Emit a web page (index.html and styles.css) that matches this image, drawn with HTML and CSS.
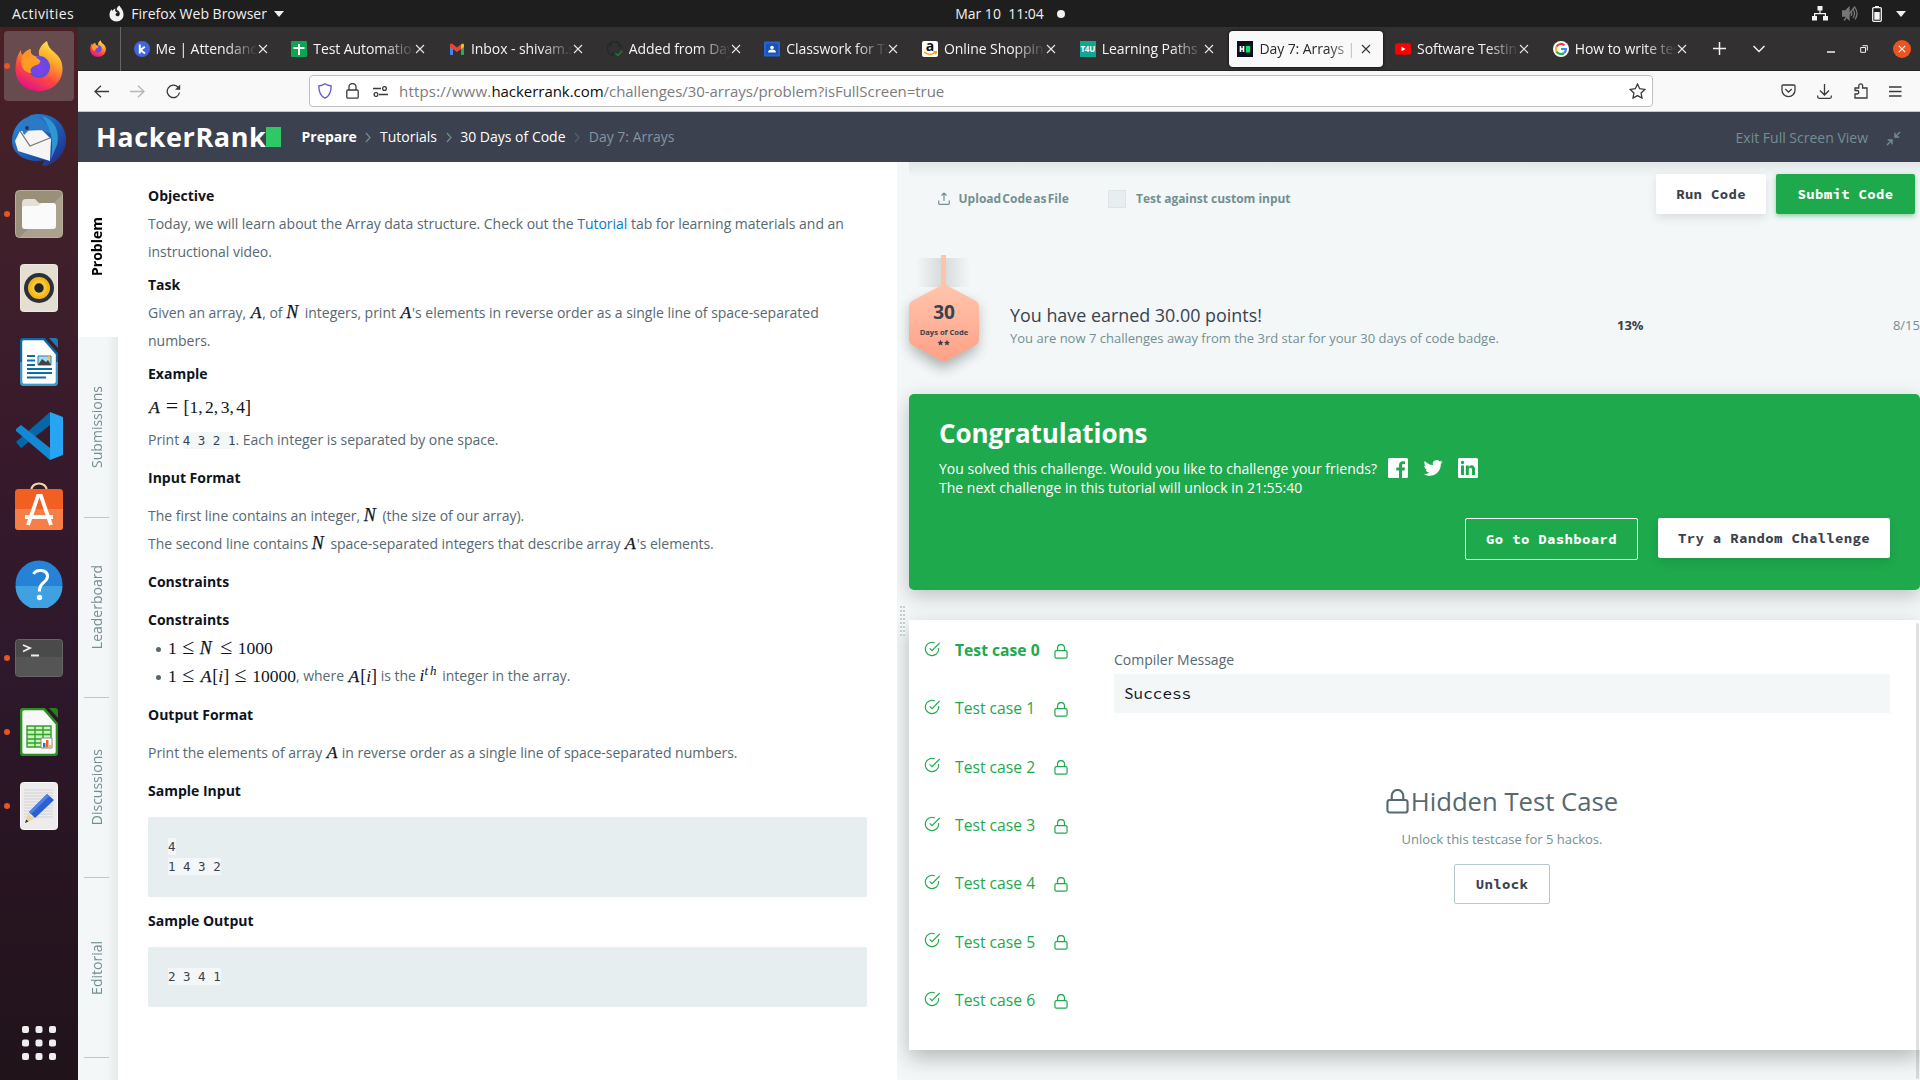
FILE: index.html
```
<!DOCTYPE html>
<html lang="en">
<head>
<meta charset="utf-8">
<title>Day 7: Arrays | HackerRank</title>
<link rel="stylesheet" href="styles.css">
</head>
<body>
<svg class="defs" width="0" height="0" aria-hidden="true">
  <defs>
    <linearGradient id="ffBody" x1=".8" y1="0" x2=".3" y2="1"><stop offset="0" stop-color="#fff04a"/><stop offset=".35" stop-color="#ffa52a"/><stop offset=".65" stop-color="#ff4a41"/><stop offset="1" stop-color="#e01085"/></linearGradient>
    <linearGradient id="ffEar" x1="0" y1="0" x2="1" y2="1"><stop offset="0" stop-color="#ff8a2a"/><stop offset="1" stop-color="#ffb02a"/></linearGradient>
    <radialGradient id="ffGlobe"><stop offset="0" stop-color="#8a3cf5"/><stop offset="1" stop-color="#5a4fd8"/></radialGradient>
    <linearGradient id="tbBody" x1="0" y1="0" x2="1" y2="1"><stop offset="0" stop-color="#2d8fe0"/><stop offset=".6" stop-color="#1e55ad"/><stop offset="1" stop-color="#27217e"/></linearGradient>
    <linearGradient id="badge" x1="0" y1="0" x2="0" y2="1"><stop offset="0" stop-color="#ffc6ae"/><stop offset="1" stop-color="#ffa086"/></linearGradient>
    <linearGradient id="cordShade"><stop offset="0" stop-color="#000" stop-opacity="0"/><stop offset=".5" stop-color="#000" stop-opacity=".12"/><stop offset="1" stop-color="#000" stop-opacity="0"/></linearGradient>
    <filter id="soft" x="-50%" y="-50%" width="200%" height="200%"><feGaussianBlur stdDeviation="7"/></filter>
    <symbol id="firefox" viewBox="0 0 48 50">
      <path d="M24 50C9 50 .5 40 .5 28 .5 19 3 13 6 9c0 3 .5 4 1.500 5 2-3 5-5 8-6 0 4 1 6 4 7l5 0C22 9 27 3 32 0c1 5 3 8 7 11 6 5 8.500 10 8.500 17C47.500 40 38 50 24 50z" fill="url(#ffBody)"/>
      <circle cx="24" cy="26" r="11" fill="url(#ffGlobe)"/>
      <path d="M7.500 14c2-3 5-5 8-6 0 4 1 6 4 7l6 5c-1 3-4 3-7 4-4 2-4 5-2 8-4 0-9-3-10-8-.6-3 0-7 1-10z" fill="url(#ffEar)"/>
      <path d="M6 20c4-2 7-1 10 1 3-1 6-1 9 .5-2 3-5 2.500-7 4-2 1.500-3 3-2.500 5-4-2-8-6-9.500-10.500z" fill="#ff9d1e"/>
    </symbol>
    <symbol id="lock" viewBox="0 0 24 26"><rect x="1.500" y="11.500" width="21" height="13" rx="2.500"/><path d="M6 11.500V7a6 6 0 0 1 12 0v4.500"/></symbol>
    <symbol id="check" viewBox="0 0 24 24"><path d="M22 10.500V12a10 10 0 1 1-6-9.200M23.500 3 12 14.500 8.500 11"/></symbol>
    <symbol id="x" viewBox="0 0 10 10"><path d="M1 1l8 8M9 1L1 9"/></symbol>
  </defs>
</svg>

<header class="topbar">
  <div class="topbar-left">
    <span>Activities</span>
    <span class="app-menu">
      <svg width="15" height="17" viewBox="0 0 15 17"><path d="M7.500 16.500C3.300 16.500.500 13.600.500 9.800.500 7 1.600 5.200 2.600 4.200c.2 1 .5 1.200 1 1.600C4.500 4.500 5.500 3.800 6.500 3.600 5.500 6 6.500 7 8.500 7.500 7 8 6 9 6.800 10.600c1.700 1.600 4.200.3 4-1.900-.1-1.800-1.600-3-3-3.600C7.600 3 8.800 1.400 10.500.500c.4 2 4 3.700 4 9.300 0 3.800-2.800 6.700-7 6.700z" fill="#f2f2f2"/></svg>
      Firefox Web Browser
      <i class="caret"></i>
    </span>
  </div>
  <div class="clock">Mar 10&nbsp; 11:04 <i class="notice"></i></div>
  <div class="topbar-right">
    <svg width="16" height="15" viewBox="0 0 16 15" fill="#f2f2f2"><path d="M5.500 0h5v4.500h-5zM0 10h5v4.500H0zM11 10h5v4.500h-5zM7.400 4h1.200v4H7.400zM2 7h12v3.500h-1.200V8.200H3.200v2.300H2z"/></svg>
    <svg width="16" height="15" viewBox="0 0 16 15" fill="none" stroke="#777" stroke-width="1.300"><path d="M.5 5h3L7 1.500v12L3.500 10h-3z" fill="#777"/><path d="M9 5q1.500 2.500 0 5M11 3q3 4.500 0 9M13 1.500q4 6 0 12M2 14.500 13 .5"/></svg>
    <svg width="10" height="16" viewBox="0 0 10 16"><path d="M3 0h4v2H3z" fill="#f2f2f2"/><rect x=".7" y="1.700" width="8.600" height="13.600" rx="1" fill="none" stroke="#f2f2f2" stroke-width="1.300"/><path d="M2.300 6h5.400v7.700H2.300z" fill="#f2f2f2"/></svg>
    <i class="caret"></i>
  </div>
</header>

<div class="desktop">
  <nav class="dock">
    <div class="dock-item active running"><svg width="48" height="50"><use href="#firefox"/></svg></div>
    <div class="dock-item"><svg width="54" height="54" viewBox="0 0 54 54"><path d="M16 4C22-1 34 1 42 5c8 5 12 13 12 22 0 12-8 22-20 26l-4-1 3-5C20 51 0 44 0 28 0 17 7 7 16 4z" fill="url(#tbBody)"/><path d="M8 18l22-1 9 9-1 22L6 38 3 28z" fill="#f5f5f5"/><path d="M8 18l10 15 20-8" fill="none" stroke="#777" stroke-width="1.300"/><path d="M17 4c10-2 20 5 22 17l-9-4c-5 1-9-3-14 1l-4 4C8 14 10 7 17 4z" fill="#2c79c8"/><path d="M30 3c13 4 18 15 15 29l-6 14c3-18 0-31-9-43z" fill="#2b98d4"/><circle cx="15" cy="15" r="2" fill="#25385a"/></svg></div>
    <div class="dock-item running"><svg width="48" height="48" viewBox="0 0 48 48"><rect x=".5" y=".5" width="47" height="47" rx="4" fill="#999079" stroke="#b8b09d"/><path d="M47 5v38a4 4 0 0 1-4 4H5z" fill="#aaa28e"/><path d="M7 13q0-4 4-4h9l4 4h12v10H7z" fill="#e4e0d8"/><path d="M7 19q0-3 3-3h13l4-3h11q3 0 3 3v20q0 3-3 3H10q-3 0-3-3z" fill="#fafafa"/></svg></div>
    <div class="dock-item"><svg width="38" height="48" viewBox="0 0 38 48"><rect x=".5" y=".5" width="37" height="47" rx="3" fill="#e4dfd2" stroke="#eee9df"/><circle cx="19" cy="24" r="15" fill="#2b303a"/><circle cx="19" cy="24" r="11" fill="#f3b816"/><circle cx="19" cy="24" r="8" fill="#fad45a" opacity=".5"/><circle cx="19" cy="24" r="4.700" fill="#20242b"/></svg></div>
    <div class="dock-item"><svg width="38" height="48" viewBox="0 0 38 48"><path d="M3 1h21l13 15v28q0 3-3 3H4q-3 0-3-3V4q0-3 3-3z" fill="#fff" stroke="#0d67a4" stroke-width="2.400"/><path d="M1 24v20q0 3 3 3h30q3 0 3-3V24" fill="none" stroke="#3a9bc9" stroke-width="2"/><path d="M29 0h6q3 0 3 3v7z" fill="#1c7bb5"/><path d="M7 18h8M7 22.500h8M7 27h8M7 31h25M7 35h25M7 39.500h19" stroke="#0c6ea9" stroke-width="2"/><path d="M18 18h13v9H18z" fill="#a7d8f2" stroke="#2b7bac"/><path d="M18 27l4-6 4 3 2-2 3 5z" fill="#434343"/><circle cx="29" cy="19.500" r="1.500" fill="#f7c42c"/></svg></div>
    <div class="dock-item"><svg width="48" height="48" viewBox="0 0 48 48"><path d="M1 30L35 0v13L6 36z" fill="#0667a8"/><path d="M1 17l5-4 29 23v12L1 19z" fill="#1389d4"/><path d="M35 0l13 5v38l-13 5z" fill="#27a4f2"/></svg></div>
    <div class="dock-item raised"><svg width="48" height="50" viewBox="0 0 48 50"><path d="M16 10C16 0 32 0 32 10" fill="none" stroke="#f3d5a5" stroke-width="2.200"/><rect y="8" width="48" height="41" rx="3.500" fill="#f25f22"/><path d="M0 28h48v17.500q0 3.500-3.500 3.500h-41Q0 49 0 45.500z" fill="#f57f45"/><path d="M13 44l10-29h3l10 29M10 36h28" fill="none" stroke="#fff" stroke-width="3.800"/></svg></div>
    <div class="dock-item"><svg width="48" height="48" viewBox="0 0 48 48"><circle cx="24" cy="24" r="23.500" fill="#2582d6"/><path d="M.5 26h47A23.500 23.500 0 0 1 .5 26z" fill="#3fa0e2"/><path d="M18.500 14c3-5.500 14-4.500 14 2.500 0 6-8 6-8 13v2" fill="none" stroke="#fff" stroke-width="3"/><circle cx="24.500" cy="37.500" r="2.700" fill="#fff"/></svg></div>
    <div class="dock-item running"><svg width="48" height="38" viewBox="0 0 48 38"><rect x=".5" y=".5" width="47" height="37" rx="3" fill="#4a4a4a" stroke="#666"/><path d="M1 18h46v16q0 3-3 3H4q-3 0-3-3z" fill="#555"/><path d="M8 6l7 3-7 3.500M16 16.500h8" fill="none" stroke="#eee" stroke-width="1.800"/></svg></div>
    <div class="dock-item running"><svg width="38" height="48" viewBox="0 0 38 48"><path d="M3 1h21l13 15v28q0 3-3 3H4q-3 0-3-3V4q0-3 3-3z" fill="#f8f8f8" stroke="#27911d" stroke-width="2.600"/><path d="M29 0h6q3 0 3 3v7z" fill="#218317"/><path d="M7 18h24v21H7z" fill="#c9f3bf"/><path d="M7 18h24v21H7zM7 22h24M7 26.500h24M7 31h24M7 35h24M15 18v21M23 18v21" fill="none" stroke="#33a027" stroke-width="1.400"/><path d="M21 30h11v10H21z" fill="#fff" stroke="#888"/><path d="M23 35h2.500v4.500H23z" fill="#1d76c4"/><path d="M26 32h2.500v7.500H26z" fill="#e8622a"/><path d="M29 37h2.500v2.500H29z" fill="#f3bf2b"/></svg></div>
    <div class="dock-item running"><svg width="38" height="48" viewBox="0 0 38 48"><rect x=".5" y=".5" width="37" height="47" rx="3" fill="#ececec" stroke="#fafafa"/><path d="M4 8h29M4 11h29M4 14h29M4 17h29M4 20h29M4 23h29M4 26h29M4 29h29M4 32h29M4 35h29" stroke="#d2d2d2"/><path d="M5 41l3-9 6 5z" fill="#f1cf9f"/><path d="M5 41l1.200-3.500 2.300 2z" fill="#333"/><path d="M27 12l7 6-19 18-6-6z" fill="#2c5fd0"/><path d="M27 12l2.500 2L11 32l-2-2z" fill="#4f82e8"/></svg></div>
    <div class="dock-item apps"><svg width="34" height="34" viewBox="0 0 34 34" fill="#eee"><g id="dots"><rect width="7" height="7" rx="2"/><rect x="13.500" width="7" height="7" rx="2"/><rect x="27" width="7" height="7" rx="2"/></g><use href="#dots" y="13.500"/><use href="#dots" y="27"/></svg></div>
  </nav>

  <div class="window">
    <div class="tabstrip">
      <div class="pinned"><svg width="16" height="17"><use href="#firefox"/></svg></div>
      <div class="tabs">
        <div class="tab"><svg width="16" height="16" viewBox="0 0 16 16"><circle cx="8" cy="8" r="8" fill="#3f64e0"/><path d="M5.800 3.500v9M10.800 5.800 6.500 9l4.500 3.500" fill="none" stroke="#fff" stroke-width="2"/></svg><span>Me | Attendance</span><svg class="close"><use href="#x"/></svg></div>
        <div class="tab"><svg width="16" height="16" viewBox="0 0 16 16"><rect width="16" height="16" rx="1" fill="#0da454"/><path d="M8 3v11M2.500 7h11" stroke="#fff" stroke-width="2"/></svg><span>Test Automation</span><svg class="close"><use href="#x"/></svg></div>
        <div class="tab"><svg width="16" height="16" viewBox="0 0 16 16"><path d="M1 3h3v11H2q-1 0-1-1z" fill="#4285f4"/><path d="M12 3h3v10q0 1-1 1h-2z" fill="#34a853"/><path d="M1 3l2-.5 5 4 5-4 2 .5v3l-7 5-7-5z" fill="#ea4335"/><path d="M12 4l1.500-1.500L15 3.500V6l-3 2.200z" fill="#fbbc04"/></svg><span>Inbox - shivam.s</span><svg class="close"><use href="#x"/></svg></div>
        <div class="tab"><svg width="16" height="16" viewBox="0 0 16 16"><path d="M6 14.500A7 7 0 1 1 14.500 8M6 14v-3M4 3v3M12 3v3" fill="none" stroke="#22292c" stroke-width="1.500"/><path d="M8.500 12.500l2.500 2 4-4.500" fill="none" stroke="#16852a" stroke-width="1.400"/></svg><span>Added from Day</span><svg class="close"><use href="#x"/></svg></div>
        <div class="tab"><svg width="16" height="16" viewBox="0 0 16 16"><rect width="16" height="15" y=".5" rx="1" fill="#2563d6"/><rect x="2" y="2.500" width="12" height="11" fill="#1a52b8"/><circle cx="8" cy="6.500" r="1.800" fill="#fff"/><path d="M4 11.500q0-3 4-3t4 3z" fill="#fff"/></svg><span>Classwork for Te</span><svg class="close"><use href="#x"/></svg></div>
        <div class="tab"><span class="fav amazon">a<svg width="14" height="5" viewBox="0 0 14 5"><path d="M1 1q6 4.500 11 .5M10.500.5h3l-1 2.800" fill="none" stroke="#f90" stroke-width="1.400"/></svg></span><span>Online Shopping</span><svg class="close"><use href="#x"/></svg></div>
        <div class="tab"><b class="fav t4u">T4U</b><span>Learning Paths |</span><svg class="close"><use href="#x"/></svg></div>
        <div class="tab current"><svg width="16" height="16" viewBox="0 0 16 16"><rect width="16" height="16" fill="#0b1020"/><path d="M3.500 5v6M6.500 5v6M3.500 8h3" stroke="#fff" stroke-width="1.700"/><path d="M8.800 5h4.400v6.500H8.800z" fill="#00ea64"/></svg><span>Day 7: Arrays | Ha</span><svg class="close"><use href="#x"/></svg></div>
        <div class="tab"><svg width="16" height="16" viewBox="0 0 16 16"><rect y="2.200" width="16" height="11.600" rx="2.500" fill="#f00"/><path d="M6.500 5.800v4.400l4-2.200z" fill="#fff"/></svg><span>Software Testing</span><svg class="close"><use href="#x"/></svg></div>
        <div class="tab"><svg width="16" height="16" viewBox="0 0 16 16" fill="none" stroke-width="2.200"><circle cx="8" cy="8" r="8" fill="#fff"/><path d="M11.500 4.300A5 5 0 0 0 3.500 5.800" stroke="#ea4335"/><path d="M3.500 5.800a5 5 0 0 0 0 4.600" stroke="#fbbc05"/><path d="M3.500 10.400a5 5 0 0 0 7.700 1.400" stroke="#34a853"/><path d="M11.200 11.800A5 5 0 0 0 12.900 8H8" stroke="#4285f4"/></svg><span>How to write tes</span><svg class="close"><use href="#x"/></svg></div>
      </div>
      <div class="tab-tools">
        <svg width="13" height="13" viewBox="0 0 13 13"><path d="M6.500 0v13M0 6.500h13"/></svg>
        <svg width="12" height="8" viewBox="0 0 12 8"><path d="M.5 1 6 6.500 11.500 1"/></svg>
      </div>
      <div class="win-tools">
        <svg width="8" height="8" viewBox="0 0 8 8"><path d="M0 7h8"/></svg>
        <svg width="8" height="8" viewBox="0 0 8 8"><path d="M.7 2.500h4.800v4.800H.7zM2.500.7h4.800v4.800" stroke-width="1"/></svg>
        <span class="win-close"><svg width="8" height="8" viewBox="0 0 10 10"><use href="#x"/></svg></span>
      </div>
    </div>

    <div class="toolbar">
      <div class="nav-buttons">
        <svg width="15" height="13" viewBox="0 0 15 13"><path d="M15 6.500H1M7 .7 1 6.500l6 5.800"/></svg>
        <svg class="dim" width="15" height="13" viewBox="0 0 15 13"><path d="M0 6.500h14M8 .7l6 5.800-6 5.800"/></svg>
        <svg width="15" height="15" viewBox="0 0 15 15"><path d="M13.500 8.500A6.200 6.200 0 1 1 12 3.200L13.700 5"/><path d="M14.200.5v5.300H9z" fill="#3a3a3d" stroke="none"/></svg>
      </div>
      <div class="urlbar">
        <svg width="14" height="16" viewBox="0 0 14 16"><path d="M7 .8C5 2.400 2.800 2.800.8 3 .8 9 2.500 13.200 7 15.200 11.500 13.200 13.200 9 13.200 3 11.200 2.800 9 2.400 7 .8z" stroke="#5a55e0"/></svg>
        <svg width="13" height="16" viewBox="0 0 13 16"><rect x=".8" y="7" width="11.400" height="8.200" rx="1.200"/><path d="M3 7V4a3.500 3.500 0 0 1 7 0v3"/></svg>
        <svg width="15" height="11" viewBox="0 0 15 11"><path d="M0 2.500h8M6 8.500h9"/><circle cx="11.500" cy="2.500" r="1.900"/><circle cx="3" cy="8.500" r="1.900"/></svg>
        <span class="url"><span class="scheme">https://www.</span><b>hackerrank.com</b>/challenges/30-arrays/problem?isFullScreen=true</span>
        <svg class="star" width="17" height="16" viewBox="0 0 17 16"><path d="M8.500 1l2.200 4.700 5.100.7-3.700 3.600.9 5.100-4.500-2.500L4 15.100l.9-5.100L1.200 6.400l5.100-.7z"/></svg>
      </div>
      <div class="tool-icons">
        <svg width="15" height="14" viewBox="0 0 15 14"><path d="M1 2.200Q1 1 2.200 1h10.600Q14 1 14 2.200v4a6.500 6.500 0 0 1-13 0zM4.300 5l3.200 3.200L10.700 5"/></svg>
        <svg width="15" height="15" viewBox="0 0 15 15"><path d="M7.500 0v10.500M3 6.500l4.500 4.500L12 6.500M.7 11.500v1.300q0 1.500 1.500 1.500h10.600q1.500 0 1.500-1.500v-1.300"/></svg>
        <svg width="14" height="16" viewBox="0 0 14 16"><path d="M1 15v-4h2a1.700 1.700 0 0 0 0-3.500H1V5h3.800V2.800a1.900 1.900 0 0 1 3.800 0V5H13v10H1z"/></svg>
        <svg width="13" height="11" viewBox="0 0 13 11"><path d="M0 1h12.500M0 5.500h12.500M0 10h12.500"/></svg>
      </div>
    </div>

    <div class="hr-header">
      <div class="logo">HackerRank<i></i></div>
      <div class="crumbs"><b>Prepare</b><svg><path d="M1 1l4 4.500L1 10"/></svg><span>Tutorials</span><svg><path d="M1 1l4 4.500L1 10"/></svg><span>30 Days of Code</span><svg class="faint"><path d="M1 1l4 4.500L1 10"/></svg><span class="here">Day 7: Arrays</span></div>
      <div class="exit">Exit Full Screen View<svg width="15" height="15" viewBox="0 0 15 15"><path d="M14 1 9.500 5.500M9 1.800V6h4.200M1 14l4.500-4.500M6 13.200V9H1.800" fill="none" stroke="#738f93" stroke-width="1.400"/></svg></div>
    </div>

    <main class="workspace">
      <aside class="side-tabs">
        <div class="side-tab selected"><span>Problem</span></div>
        <div class="side-tab"><span>Submissions</span></div>
        <div class="side-tab"><span>Leaderboard</span></div>
        <div class="side-tab"><span>Discussions</span></div>
        <div class="side-tab"><span>Editorial</span></div>
      </aside>

      <article class="problem">
        <h3>Objective</h3>
        <p>Today, we will learn about the Array data structure. Check out the <a>Tutorial</a> tab for learning materials and an instructional video.</p>
        <h3>Task</h3>
        <p>Given an array, <i class="m a">A</i>, of <i class="m n">N</i> integers, print <i class="m a">A</i>'s elements in reverse order as a single line of space-separated numbers.</p>
        <h3>Example</h3>
        <p class="formula"><span class="m"><i class="a">A</i><span class="rel">=</span><span class="br">[</span>1<u>,</u>2<u>,</u>3<u>,</u>4<span class="br">]</span></span></p>
        <p>Print <code>4 3 2 1</code>. Each integer is separated by one space.</p>
        <h3 class="section">Input Format</h3>
        <p>The first line contains an integer, <i class="m n">N</i> (the size of our array).<br>The second line contains <i class="m n">N</i> space-separated integers that describe array <i class="m a">A</i>'s elements.</p>
        <h3 class="section">Constraints</h3>
        <h3 class="section last">Constraints</h3>
        <ul>
          <li><span class="m">1<span class="rel">≤</span><i class="n">N</i><span class="rel">≤</span>1000</span></li>
          <li><span class="m">1<span class="rel">≤</span><i class="a">A</i><span class="br">[</span><i>i</i><span class="br">]</span><span class="rel">≤</span>10000</span>, where <span class="m"><i class="a">A</i><span class="br">[</span><i>i</i><span class="br">]</span></span> is the <i class="m">i<sup>th</sup></i> integer in the array.</li>
        </ul>
        <h3 class="section">Output Format</h3>
        <p>Print the elements of array <i class="m a">A</i> in reverse order as a single line of space-separated numbers.</p>
        <h3 class="section">Sample Input</h3>
        <pre><code>4
1 4 3 2</code></pre>
        <h3 class="section after">Sample Output</h3>
        <pre><code>2 3 4 1</code></pre>
      </article>

      <section class="editor">
        <div class="splitter"></div>
        <div class="results">
          <div class="actions">
            <div class="upload"><svg width="12" height="13" viewBox="0 0 12 13"><path d="M6 9V1M3.500 3.500 6 1l2.500 2.500M.7 8.500v2.800q0 1 1 1h8.600q1 0 1-1V8.500" fill="none" stroke="#738f93" stroke-width="1.200"/></svg>Upload Code as File</div>
            <label class="custom"><i></i>Test against custom input</label>
            <button class="btn white">Run Code</button>
            <button class="btn green">Submit Code</button>
          </div>

          <div class="score">
            <svg class="badge" width="101" height="138" viewBox="0 0 101 138">
              <rect x="7" y="3" width="54" height="29" fill="url(#cordShade)"/>
              <path d="M34 40 2 52v42l32 20 34-20V52z" fill="#000" opacity=".3" filter="url(#soft)"/>
              <rect x="32" width="5" height="32" fill="#ffc3aa"/>
              <path d="M31 31q4-3 8 0l28 15q3 2 3 5v34q0 3-3 5l-28 15q-4 2-8 0L3 90q-3-2-3-5V51q0-3 3-5z" fill="url(#badge)"/>
              <text x="35" y="64" class="badge-num">30</text>
              <text x="35" y="80" class="badge-cap">Days of Code</text>
              <path id="st" d="M31.500 84.800l.9 2 2.100.2-1.600 1.400.5 2.200-1.900-1.100-1.900 1.100.5-2.200-1.600-1.400 2.100-.2z" fill="#39424e"/>
              <use href="#st" x="6.500"/>
            </svg>
            <div class="score-text"><h2>You have earned 30.00 points!</h2><p>You are now 7 challenges away from the 3rd star for your 30 days of code badge.</p></div>
            <b>13%</b>
            <span>8/15</span>
          </div>

          <div class="congrats">
            <h1>Congratulations</h1>
            <div class="share">You solved this challenge. Would you like to challenge your friends?
              <svg width="20" height="20" viewBox="0 0 20 20"><path d="M1.500 0h17Q20 0 20 1.500v17q0 1.500-1.500 1.500H14v-7.600h2.600l.4-3H14V7.500c0-.9.3-1.500 1.500-1.500H17V3.300Q16.300 3.200 14.800 3.200c-2.300 0-3.800 1.400-3.800 3.900v2.300H8.300v3H11V20H1.500Q0 20 0 18.500v-17Q0 0 1.500 0z"/></svg>
              <svg width="20" height="20" viewBox="0 0 24 24"><path d="M23.600 4.900c-.8.400-1.700.6-2.700.8 1-.6 1.700-1.500 2.100-2.600-.9.500-1.900.9-3 1.100a4.700 4.700 0 0 0-8.100 4.300C8 8.300 4.500 6.400 2.200 3.600c-1.200 2.100-.6 5 1.400 6.300-.8 0-1.500-.2-2.100-.6 0 2.300 1.600 4.200 3.800 4.700-.7.200-1.400.2-2.100.1.600 1.900 2.300 3.200 4.400 3.300A9.500 9.500 0 0 1 .6 19.300c2.100 1.400 4.600 2.100 7.300 2.100 8.800 0 13.800-7.400 13.500-14.100.9-.6 1.700-1.400 2.200-2.400z"/></svg>
              <svg width="20" height="20" viewBox="0 0 20 20"><path fill-rule="evenodd" d="M1.500 0h17Q20 0 20 1.500v17q0 1.500-1.500 1.500h-17Q0 20 0 18.500v-17Q0 0 1.500 0zM3 7.500V17h3V7.500zM4.500 2.800a1.700 1.700 0 1 0 0 3.400 1.700 1.700 0 0 0 0-3.400zM7.800 7.500V17h3v-5c0-3 3.200-2.800 3.200 0v5h3v-5.500c0-5-4.700-5.200-6.200-2.500V7.500z"/></svg>
            </div>
            <p>The next challenge in this tutorial will unlock in 21:55:40</p>
            <div class="congrats-actions"><button class="btn outline">Go to Dashboard</button><button class="btn white">Try a Random Challenge</button></div>
          </div>

          <div class="tests">
            <ul class="cases">
              <li class="on"><svg class="ok"><use href="#check"/></svg><span>Test case 0</span><svg class="lk"><use href="#lock"/></svg></li>
              <li><svg class="ok"><use href="#check"/></svg><span>Test case 1</span><svg class="lk"><use href="#lock"/></svg></li>
              <li><svg class="ok"><use href="#check"/></svg><span>Test case 2</span><svg class="lk"><use href="#lock"/></svg></li>
              <li><svg class="ok"><use href="#check"/></svg><span>Test case 3</span><svg class="lk"><use href="#lock"/></svg></li>
              <li><svg class="ok"><use href="#check"/></svg><span>Test case 4</span><svg class="lk"><use href="#lock"/></svg></li>
              <li><svg class="ok"><use href="#check"/></svg><span>Test case 5</span><svg class="lk"><use href="#lock"/></svg></li>
              <li><svg class="ok"><use href="#check"/></svg><span>Test case 6</span><svg class="lk"><use href="#lock"/></svg></li>
            </ul>
            <div class="output">
              <div class="label">Compiler Message</div>
              <div class="message">Success</div>
              <div class="hidden-case">
                <h2><svg width="23" height="25"><use href="#lock"/></svg>Hidden Test Case</h2>
                <p>Unlock this testcase for 5 hackos.</p>
                <button class="btn unlock">Unlock</button>
              </div>
            </div>
          </div>
        </div>
        <div class="scrollbar"></div>
      </section>
    </main>
  </div>
</div>
</body>
</html>
```
FILE: styles.css
```
* { box-sizing: border-box; margin: 0; padding: 0; }
body { width: 1920px; height: 1080px; overflow: hidden; font: 14px/28px "Open Sans", "Noto Sans", sans-serif; color: #576871; background: #fff; display: flex; flex-direction: column; }
svg { display: block; flex: none; }
.defs { position: absolute; }
ul { list-style: none; }

/* system bar */
.topbar { height: 27px; background: #1e1e1e; color: #f0f0f0; display: grid; grid-template-columns: 1fr auto 1fr; align-items: center; line-height: 27px; }
.topbar-left { display: flex; gap: 35px; padding-left: 12px; }
.topbar-left > span:first-child { letter-spacing: .45px; }
.app-menu { display: flex; align-items: center; gap: 7px; }
.caret { border: 5px solid transparent; border-top: 6px solid #f0f0f0; border-bottom: 0; }
.clock { display: flex; align-items: center; padding-left: 100px; }
.clock .notice { width: 8px; height: 8px; border-radius: 50%; background: #f2f2f2; margin-left: 13px; }
.topbar-right { display: flex; justify-content: flex-end; align-items: center; gap: 14px; padding-right: 14px; }

.desktop { flex: 1; display: flex; min-height: 0; }

/* launcher */
.dock { width: 78px; background: linear-gradient(#4a2024 0, #40202a 18%, #37192b 42%, #2e182c 60%, #26141f 85%, #20131a); display: flex; flex-direction: column; gap: 4px; padding: 4px; }
.dock-item { height: 70px; border-radius: 4px; display: flex; align-items: center; justify-content: center; position: relative; flex: none; }
.dock-item.active { background: #684b4e; }
.dock-item.raised { padding-bottom: 8px; }
.dock-item.running::before { content: ""; position: absolute; left: 0; top: 32px; width: 6px; height: 6px; border-radius: 50%; background: #e95420; }
.dock-item.apps { margin-top: auto; margin-bottom: -2px; }

.window { flex: 1; display: flex; flex-direction: column; min-width: 0; }

/* browser tabs */
.tabstrip { height: 44px; background: #333031; border-bottom: 1px solid #222; color: #f5f5f5; display: flex; align-items: center; }
.pinned { width: 43px; height: 44px; padding: 13px 0 0 12px; border-right: 1px solid #67656a; }
.tabs { display: flex; gap: 4px; padding-left: 4.600px; width: 1582px; flex: none; }
.tab { width: 153.700px; height: 36px; border-radius: 4px; display: flex; align-items: center; padding-left: 8px; flex: none; }
.tab > span:not(.fav) { width: 102px; margin-left: 6px; padding-top: 1px; letter-spacing: -.08px; overflow: hidden; white-space: nowrap; mask-image: linear-gradient(90deg, #000 68%, transparent 100%); }
.tab .close { width: 10px; height: 10px; stroke: #e8e8e8; stroke-width: 1.100; }
.current { background: #f9f9fa; color: #2a2a2e; box-shadow: 0 0 3px #000; }
.current .close { stroke: #333; }
.fav { width: 16px; height: 16px; flex: none; overflow: hidden; }
.amazon { background: #fff; color: #111; border-radius: 2px; font: bold 14px/10px "Open Sans", sans-serif; text-align: center; }
.amazon svg { margin: 0 1px; }
.t4u { background: #12a594; color: #fff; font: bold 8px/16px "Open Sans", sans-serif; letter-spacing: -.3px; text-align: center; }
.tab-tools { display: flex; gap: 27px; align-items: center; padding-left: 10px; }
.tab-tools svg, .win-tools svg { fill: none; stroke: #f2f2f2; stroke-width: 1.500; }
.win-tools { display: flex; gap: 25px; align-items: center; margin-left: auto; padding-right: 9px; }
.win-close { width: 18px; height: 18px; border-radius: 50%; background: #e95420; display: grid; place-items: center; }

/* browser toolbar */
.toolbar { height: 41px; background: #f9f9fa; border-bottom: 1px solid #c8c8ca; display: flex; align-items: center; position: relative; }
.toolbar svg { fill: none; stroke: #3a3a3d; stroke-width: 1.300; }
.nav-buttons { width: 231px; display: flex; gap: 21px; padding-left: 16px; align-items: center; }
.toolbar .dim { stroke: #b5b5b7; }
.urlbar { width: 1344px; height: 32px; background: #fff; border: 1px solid #bfbfc1; border-radius: 4px; display: flex; align-items: center; gap: 14px; padding: 0 6px 0 8px; }
.url { color: #7b7b7e; font-size: 15px; line-height: 30px; margin-left: -3px; letter-spacing: -.04px; }
.scheme { letter-spacing: .2px; }
.url b { color: #0c0c0d; font-weight: 400; }
.star { margin-left: auto; }
.tool-icons { display: flex; gap: 21.500px; align-items: center; margin-left: auto; padding-right: 18px; }

/* site header */
.hr-header { height: 50px; background: #3b414f; color: #fff; display: flex; align-items: center; padding: 0 19px 0 18px; flex: none; }
.logo { font-weight: 700; font-size: 27px; line-height: 48px; letter-spacing: .6px; display: flex; align-items: center; width: 205.500px; }
.logo i { width: 15px; height: 20px; background: #2ec866; }
.crumbs { display: flex; align-items: center; }
.crumbs svg { width: 6px; height: 11px; margin: 0 8.600px; fill: none; stroke: #738f93; stroke-width: 1.200; }
.crumbs .faint { stroke: #54616b; }
.crumbs .here { color: #8494a0; }
.exit { margin-left: auto; color: #738f93; display: flex; gap: 18px; align-items: center; padding-top: 2px; }

.workspace { flex: 1; display: flex; min-height: 0; }

/* vertical tabs */
.side-tabs { width: 40px; background: linear-gradient(90deg, #f3f7f7 70%, #e6eaea); flex: none; overflow: hidden; }
.side-tab { height: 180px; width: 25px; margin-left: 6px; border-bottom: 1px solid #b7c9cc; color: #738f93; display: flex; align-items: center; justify-content: center; }
.side-tab span { writing-mode: vertical-rl; transform: rotate(180deg); line-height: 25px; }
.side-tab:nth-child(2) { height: 181px; }
.side-tab.selected { height: 175px; width: 40px; margin: 0; padding: 0 9px 6px 6px; border: 0; background: #fff; color: #000; font-weight: 700; }

/* problem statement */
.problem { width: 779px; padding: 20px 30px 0; flex: none; overflow: hidden; }
.problem h3 { font-size: 14px; line-height: 28px; color: #0e141e; margin-top: 5px; }
.problem h3:first-child { margin-top: 0; }
.problem p { letter-spacing: -.022px; }
.problem .section { margin: 10px 0; }
.problem .last { margin-bottom: 0; }
.problem ul + .section { margin-top: 11px; }
.problem a { color: #097bbf; }
.formula { margin: 5px 0; }
.m { font-family: "Liberation Serif", "Times New Roman", serif; font-size: 17.500px; line-height: 1; color: #0e141e; }
.m .a, .m.a { display: inline-block; width: 12.500px; font-size: 17.500px; text-align: center; line-height: 1; -webkit-text-stroke: .25px #0e141e; }
.m .n, .m.n { display: inline-block; width: 15px; font-size: 18px; line-height: 1; -webkit-text-stroke: .25px #0e141e; }
.m .rel { display: inline-block; width: 13px; text-align: center; margin: 0 5px; font-size: 22px; line-height: 14px; }
.m u { text-decoration: none; margin-right: 2.500px; }
.m .br { font-size: 18px; line-height: 1; }
.m sup { font-size: 13px; line-height: 0; letter-spacing: 2px; vertical-align: 6px; }
.formula .m, li span.m { position: relative; top: 1px; }
.problem li { padding-left: 20px; position: relative; }
.problem li::before { content: ""; position: absolute; left: 8px; top: 13px; width: 5px; height: 5px; border-radius: 50%; background: #576871; }
.problem code { font: 12.500px/20px "DejaVu Sans Mono", "Liberation Mono", monospace; color: #39424e; background: #f3f7f7; padding: 1px 0; letter-spacing: 0; }
.problem pre { background: #e7eeef; padding: 20px; border-radius: 2px; line-height: 20px; font-size: 12.500px; }
.problem .section:has(+ pre) { margin-bottom: 12px; }
.problem pre + .section { margin-top: 10px; }

/* result side */
.editor { flex: 1; background: #f3f7f7; display: flex; position: relative; overflow: hidden; }
.splitter { width: 12px; flex: none; }
.splitter::before { content: ""; display: block; margin: 444px 0 0 3px; width: 5px; height: 30px; background: repeating-linear-gradient(#c5cacb 0 2px, #f3f7f7 2px 4px); mask-image: linear-gradient(90deg, #000 2px, transparent 2px 3px, #000 3px); }
.results { flex: 1; display: flex; flex-direction: column; min-width: 0; }
.actions { height: 64px; padding: 12px 5px 0 29px; display: flex; font-weight: 700; font-size: 12px; color: #738f93; background: linear-gradient(#e2e6e6, #f3f7f7 15px); }
.upload { display: flex; gap: 8.500px; align-items: center; height: 49px; width: 170px; word-spacing: -2px; letter-spacing: .02px; }
.custom { display: flex; gap: 10px; align-items: center; height: 49px; margin-right: auto; letter-spacing: -.03px; }
.custom i { width: 18px; height: 18px; background: #e7eeef; border: 1px solid #dde4e4; }
.btn { height: 40px; padding: 0 20px; border: 0; border-radius: 2px; font: 700 14px/40px "Source Code Pro", "Liberation Mono", monospace; letter-spacing: .33px; color: #39424e; white-space: nowrap; background: #fff; }
.white { box-shadow: 0 4px 10px rgba(0, 0, 0, .1); }
.green { background: #1ea94d; color: #fff; margin-left: 10px; width: 139px; box-shadow: 0 2px 5px rgba(30, 169, 77, .5); }
.score { height: 168px; display: flex; }
.badge { margin-top: 29px; overflow: visible; }
.badge-num { font: 700 19px "Open Sans", sans-serif; fill: #39424e; text-anchor: middle; }
.badge-cap { font: 700 7.600px "Open Sans", sans-serif; fill: #39424e; text-anchor: middle; }
.score-text { width: 607px; padding-top: 76px; }
.score-text h2 { font-size: 17.900px; font-weight: 400; line-height: 26px; color: #39424e; }
.score-text p { font-size: 13px; line-height: 18px; padding-top: 1px; color: #738f93; }
.score b, .score > span { font-size: 13px; line-height: 20px; padding-top: 89px; }
.score b { color: #39424e; }
.score > span { margin-left: auto; color: #738f93; }

.congrats { height: 196px; background: #1ea94d; color: #fff; border-radius: 5px; padding: 19px 30px 0; box-shadow: 0 6px 20px rgba(0, 0, 0, .22); flex: none; }
.congrats h1 { font-size: 26px; line-height: 40px; letter-spacing: -.06px; }
.share { display: flex; align-items: center; height: 19px; margin-top: 6px; line-height: 19px; }
.share svg { fill: #fff; margin: -2px 15px 0 0; }
.share svg:first-of-type { margin-left: 11px; }
.congrats p { line-height: 19px; }
.congrats-actions { display: flex; justify-content: flex-end; align-items: flex-start; gap: 20px; margin-top: 21px; }
.outline { background: transparent; border: 1px solid #fff; color: #fff; height: 42px; }

.tests { height: 430px; margin-top: 30px; background: #fff; display: flex; box-shadow: 0 8px 20px rgba(0, 0, 0, .25); flex: none; }
.cases { width: 205px; padding: 1px 0 0 15px; }
.cases li { height: 58.330px; display: flex; align-items: center; color: #1ea94d; font-size: 15.700px; }
.cases span { width: 99px; margin-left: 15px; }
.cases svg { fill: none; stroke: #1ea94d; }
.cases .on { font-weight: 700; }
.ok { width: 16px; height: 16px; stroke-width: 1.700; margin-bottom: 3px; }
.lk { width: 14px; height: 15px; stroke-width: 2.100; margin-top: 2px; }
.output { flex: 1; padding: 26px 30px 0 0; }
.label { line-height: 28px; }
.message { background: #f3f7f7; height: 39px; padding-left: 10px; font: 16px/39px "Source Code Pro", "Liberation Mono", monospace; color: #0e141e; }
.hidden-case { display: flex; flex-direction: column; align-items: center; padding-top: 66px; }
.hidden-case h2 { font-weight: 400; font-size: 25.700px; line-height: 46px; display: flex; align-items: center; gap: 2px; }
.hidden-case h2 svg { fill: none; stroke: #576871; stroke-width: 2.200; margin-bottom: 2px; }
.hidden-case p { font-size: 13px; line-height: 28px; color: #738f93; }
.unlock { margin-top: 11px; border: 1px solid #b7c9cc; line-height: 38px; }
.hidden-case .unlock { padding: 0 21px; }
.scrollbar { position: absolute; right: 1px; top: 461px; width: 3px; height: 456px; border-radius: 2px; background: rgba(0, 0, 0, .12); }
```
